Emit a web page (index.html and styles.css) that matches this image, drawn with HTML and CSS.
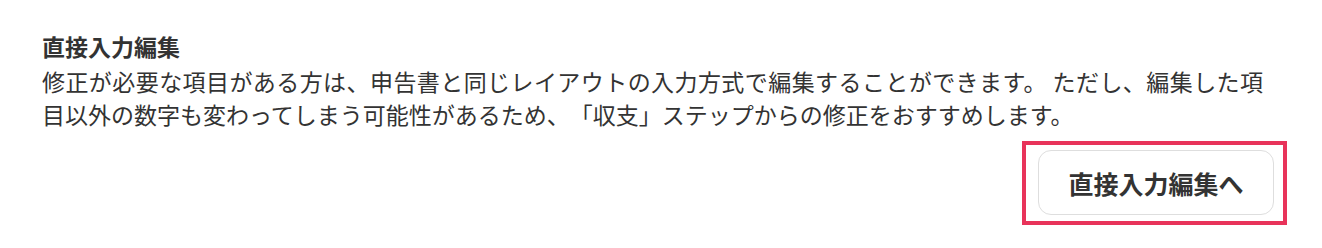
FILE: index.html
```html
<!DOCTYPE html>
<html lang="ja">
<head>
<meta charset="utf-8">
<link rel="stylesheet" href="styles.css">
</head>
<body>
<section class="panel">
  <h2 class="title">直接入力編集</h2>
  <p class="desc">修正が必要な項目がある方は、申告書と同じレイアウトの入力方式で編集することができます。 ただし、編集した項目以外の数字も変わってしまう可能性があるため、「収支」ステップからの修正をおすすめします。</p>
  <div class="actions">
    <div class="highlight">
      <button class="btn" type="button">直接入力編集へ</button>
    </div>
  </div>
</section>
</body>
</html>
```

FILE: styles.css
```css
html, body {
  margin: 0;
  padding: 0;
  background: #ffffff;
}
body {
  font-family: "Noto Sans CJK JP", "Noto Sans", sans-serif;
  color: #333333;
  text-spacing-trim: space-all;
}
.panel {
  width: 1245px;
  padding: 30px 0 0 42px;
}
.title {
  margin: 0 0 2px 0;
  font-size: 23px;
  line-height: 33px;
  font-weight: 700;
  color: #333333;
}
.desc {
  margin: 0;
  width: 1221px;
  font-size: 23px;
  line-height: 33px;
  color: #333333;
  text-align: justify;
}
.actions {
  display: flex;
  justify-content: flex-end;
  margin-top: 10px;
}
.highlight {
  display: flex;
  border: 4px solid #e8335a;
  padding: 5px 9px 6px 12px;
}
.btn {
  box-sizing: border-box;
  height: 65px;
  width: 236px;
  padding: 0;
  border: 1px solid #dedede;
  border-radius: 13px;
  background: #ffffff;
  font-family: "Noto Sans CJK JP", "Noto Sans", sans-serif;
  font-size: 25px;
  font-weight: 700;
  color: #333333;
  display: flex;
  align-items: center;
  justify-content: center;
}
```
